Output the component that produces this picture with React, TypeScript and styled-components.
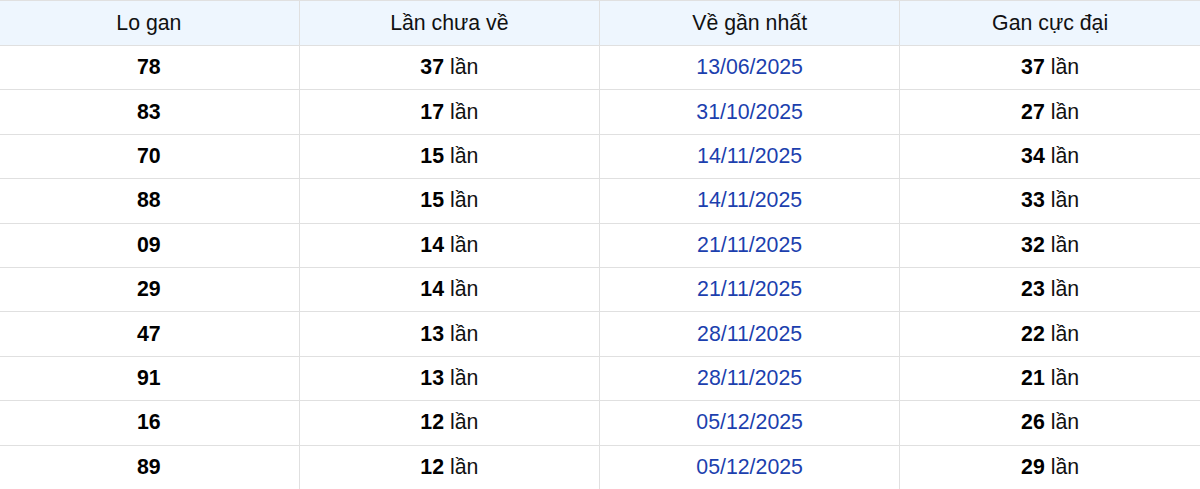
import styled, { createGlobalStyle } from 'styled-components';

const GlobalStyle = createGlobalStyle`
  html, body {
    margin: 0;
    padding: 0;
    background: #fff;
    overflow: hidden;
  }
  body {
    font-family: "Liberation Sans", Arial, sans-serif;
  }
`;

const Table = styled.table`
  width: 1201px;
  margin-left: -1px;
  border-collapse: collapse;
  table-layout: fixed;
  border-top: 1px solid #e0e0e0;
  font-size: 21.3px;
  color: #111;
`;

const HeadCell = styled.th`
  height: 44px;
  padding: 0;
  font-weight: 400;
  text-align: center;
  background: #eef6fe;
  border: 1px solid #e0e0e0;
  border-top: none;
  &:first-child { border-left: none; }
  &:last-child { border-right: none; }
`;

const Cell = styled.td<{ $date?: boolean }>`
  height: 43.4px;
  padding: 0;
  text-align: center;
  color: ${({ $date }) => ($date ? '#1c3fae' : '#111')};
  border: 1px solid #e0e0e0;
  &:first-child { border-left: none; }
  &:last-child { border-right: none; }
`;

const Num = styled.b`
  font-weight: 700;
  color: #000;
`;

type Row = { lo: string; current: number; last: string; max: number };

const rows: Row[] = [
  { lo: '78', current: 37, last: '13/06/2025', max: 37 },
  { lo: '83', current: 17, last: '31/10/2025', max: 27 },
  { lo: '70', current: 15, last: '14/11/2025', max: 34 },
  { lo: '88', current: 15, last: '14/11/2025', max: 33 },
  { lo: '09', current: 14, last: '21/11/2025', max: 32 },
  { lo: '29', current: 14, last: '21/11/2025', max: 23 },
  { lo: '47', current: 13, last: '28/11/2025', max: 22 },
  { lo: '91', current: 13, last: '28/11/2025', max: 21 },
  { lo: '16', current: 12, last: '05/12/2025', max: 26 },
  { lo: '89', current: 12, last: '05/12/2025', max: 29 },
];

export default function App() {
  return (
    <>
      <GlobalStyle />
      <Table>
        <thead>
          <tr>
            <HeadCell>Lo gan</HeadCell>
            <HeadCell>Lần chưa về</HeadCell>
            <HeadCell>Về gần nhất</HeadCell>
            <HeadCell>Gan cực đại</HeadCell>
          </tr>
        </thead>
        <tbody>
          {rows.map((r) => (
            <tr key={r.lo}>
              <Cell><Num>{r.lo}</Num></Cell>
              <Cell><Num>{r.current}</Num> lần</Cell>
              <Cell $date>{r.last}</Cell>
              <Cell><Num>{r.max}</Num> lần</Cell>
            </tr>
          ))}
        </tbody>
      </Table>
    </>
  );
}
